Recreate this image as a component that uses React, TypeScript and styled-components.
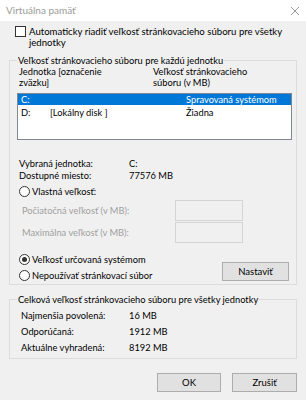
import React from 'react'
import styled, { createGlobalStyle } from 'styled-components'

const GlobalStyle = createGlobalStyle`
    html, body {
        margin: 0;
        padding: 0;
        background: #f0f0f0;
    }
    * {
        box-sizing: border-box;
    }
`

const Window = styled.div`
    width: 306px;
    height: 400px;
    background: #f0f0f0;
    font-family: Lato, 'Noto Sans', sans-serif;
    font-size: 9.3px;
    line-height: 11px;
    color: #000;
    display: flex;
    flex-direction: column;
    overflow: hidden;
`

const TitleBar = styled.div`
    height: 21px;
    background: #fff;
    display: flex;
    align-items: center;
    justify-content: space-between;
    padding: 0 6px 0 6px;
    color: #9a9a9a;
    font-size: 10px;
`

const Body = styled.div`
    padding: 5px 9px 0 9px;
    display: flex;
    flex-direction: column;
`

const CheckRow = styled.label`
    display: flex;
    align-items: flex-start;
    gap: 3px;
    padding-left: 6px;
    font-size: 9.6px;
    line-height: 11px;
    white-space: nowrap;
`

const Box = styled.span`
    flex: none;
    width: 11px;
    height: 11px;
    border: 1px solid #333;
    background: #fff;
`

const Group = styled.fieldset<{ $height: number; $top: number }>`
    margin: ${(p) => p.$top}px 0 0 0;
    height: ${(p) => p.$height}px;
    border: 1px solid #dcdcdc;
    padding: 0 4px 0 7px;
    display: flex;
    flex-direction: column;
`

const Legend = styled.legend`
    padding: 0 1px;
    margin-left: 0;
    line-height: 11px;
`

const Headers = styled.div`
    display: grid;
    grid-template-columns: 134px 1fr;
    margin-left: 2px;
`

const List = styled.div`
    margin-top: 5px;
    height: 47px;
    border: 1px solid #828790;
    background: #fff;
    display: flex;
    flex-direction: column;
`

const ListRow = styled.div<{ $selected?: boolean }>`
    display: grid;
    grid-template-columns: 29px 136px 1fr;
    height: 11px;
    line-height: 11px;
    padding-left: 3px;
    margin-bottom: 2px;
    white-space: nowrap;
    background: ${(p) => (p.$selected ? '#0078d7' : 'transparent')};
    color: ${(p) => (p.$selected ? '#fff' : '#000')};
`

const InfoGrid = styled.div<{ $gap: number; $top: number; $left: number }>`
    display: grid;
    grid-template-columns: ${(p) => 112 - p.$left}px 1fr;
    row-gap: ${(p) => p.$gap}px;
    margin-top: ${(p) => p.$top}px;
    margin-left: ${(p) => p.$left}px;
`

const RadioRow = styled.label<{ $top: number }>`
    display: flex;
    align-items: center;
    gap: 2px;
    margin-top: ${(p) => p.$top}px;
    margin-left: 2px;
    height: 11px;
    white-space: nowrap;
`

const Radio = styled.span<{ $checked?: boolean }>`
    flex: none;
    width: 11px;
    height: 11px;
    border-radius: 50%;
    border: 1px solid #333;
    background: #fff;
    display: flex;
    align-items: center;
    justify-content: center;
    &::after {
        content: '';
        display: ${(p) => (p.$checked ? 'block' : 'none')};
        width: 5px;
        height: 5px;
        border-radius: 50%;
        background: #333;
    }
`

const FieldRow = styled.div<{ $top: number }>`
    display: flex;
    align-items: center;
    justify-content: space-between;
    margin-top: ${(p) => p.$top}px;
    margin-left: 5px;
    padding-right: 49px;
    color: #a0a0a0;
`

const Field = styled.div`
    width: 68px;
    height: 21px;
    border: 1px solid #d4d4d4;
    background: #f0f0f0;
`

const Bottom = styled.div`
    display: flex;
    align-items: flex-end;
    justify-content: space-between;
    margin-top: 11px;
    padding-right: 3px;
`

const Radios = styled.div`
    display: flex;
    flex-direction: column;
`

const Button = styled.button<{ $width: number }>`
    width: ${(p) => p.$width}px;
    height: 19px;
    padding: 0;
    border: 1px solid #adadad;
    background: #e1e1e1;
    font-family: inherit;
    font-size: 9.5px;
    color: #000;
`

const Footer = styled.div`
    display: flex;
    justify-content: flex-end;
    gap: 11px;
    margin-top: 14px;
`

export default function App() {
    return (
        <Window>
            <GlobalStyle />
            <TitleBar>
                <span>Virtuálna pamäť</span>
                <svg width="10" height="10" viewBox="0 0 10 10">
                    <path d="M1 1 L9 9 M9 1 L1 9" stroke="#999" strokeWidth="1" fill="none" />
                </svg>
            </TitleBar>
            <Body>
                <CheckRow>
                    <Box />
                    <span>
                        Automaticky riadiť veľkosť stránkovacieho súboru pre všetky
                        <br />
                        jednotky
                    </span>
                </CheckRow>
                <Group $height={230} $top={7}>
                    <Legend>Veľkosť stránkovacieho súboru pre každú jednotku</Legend>
                    <Headers>
                        <span>
                            Jednotka [označenie
                            <br />
                            zväzku]
                        </span>
                        <span>
                            Veľkosť stránkovacieho
                            <br />
                            súboru (v MB)
                        </span>
                    </Headers>
                    <List>
                        <ListRow $selected>
                            <span>C:</span>
                            <span></span>
                            <span>Spravovaná systémom</span>
                        </ListRow>
                        <ListRow>
                            <span>D:</span>
                            <span>[Lokálny disk ]</span>
                            <span>Žiadna</span>
                        </ListRow>
                    </List>
                    <InfoGrid $gap={1} $top={18} $left={2}>
                        <span>Vybraná jednotka:</span>
                        <span>C:</span>
                        <span>Dostupné miesto:</span>
                        <span>77576 MB</span>
                    </InfoGrid>
                    <RadioRow $top={5}>
                        <Radio />
                        <span>Vlastná veľkosť:</span>
                    </RadioRow>
                    <FieldRow $top={3}>
                        <span>Počiatočná veľkosť (v MB):</span>
                        <Field />
                    </FieldRow>
                    <FieldRow $top={1}>
                        <span>Maximálna veľkosť (v MB):</span>
                        <Field />
                    </FieldRow>
                    <Bottom>
                        <Radios>
                            <RadioRow $top={0}>
                                <Radio $checked />
                                <span>Veľkosť určovaná systémom</span>
                            </RadioRow>
                            <RadioRow $top={5}>
                                <Radio />
                                <span>Nepoužívať stránkovací súbor</span>
                            </RadioRow>
                        </Radios>
                        <Button $width={67}>Nastaviť</Button>
                    </Bottom>
                </Group>
                <Group $height={65} $top={9}>
                    <Legend>Celková veľkosť stránkovacieho súboru pre všetky jednotky</Legend>
                    <InfoGrid $gap={5} $top={5} $left={4}>
                        <span>Najmenšia povolená:</span>
                        <span>16 MB</span>
                        <span>Odporúčaná:</span>
                        <span>1912 MB</span>
                        <span>Aktuálne vyhradená:</span>
                        <span>8192 MB</span>
                    </InfoGrid>
                </Group>
                <Footer>
                    <Button $width={64}>OK</Button>
                    <Button $width={65}>Zrušiť</Button>
                </Footer>
            </Body>
        </Window>
    )
}
